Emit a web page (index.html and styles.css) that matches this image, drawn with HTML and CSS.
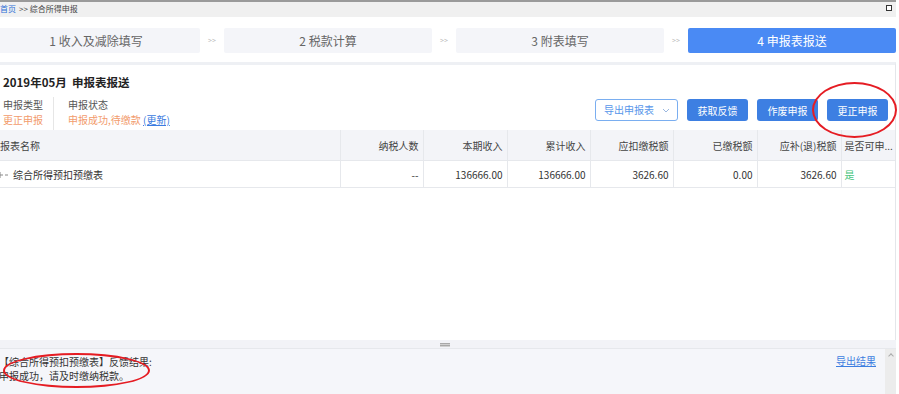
FILE: index.html
```html
<!DOCTYPE html>
<html lang="zh-CN">
<head>
    <meta charset="UTF-8">
    <meta name="viewport" content="width=device-width, initial-scale=1.0">
    <title>综合所得申报</title>
    <link rel="stylesheet" href="styles.css">
</head>
<body>
    <div class="page">
        <div class="crumb">
            <a href="#">首页</a> &gt;&gt; 综合所得申报
            <span class="win-btn"></span>
        </div>
        <div class="steps">
            <div class="step">1 收入及减除填写</div>
            <span class="sep">&gt;&gt;</span>
            <div class="step">2 税款计算</div>
            <span class="sep">&gt;&gt;</span>
            <div class="step">3 附表填写</div>
            <span class="sep">&gt;&gt;</span>
            <div class="step active">4 申报表报送</div>
        </div>
        <div class="card">
            <div class="card-head">
                <h2 class="title">2019年05月&nbsp;&nbsp;申报表报送</h2>
                <div class="info-bar">
                    <div class="info">
                        <div class="info-item">
                            <span class="lbl">申报类型</span>
                            <span class="val">更正申报</span>
                        </div>
                        <div class="info-item">
                            <span class="lbl">申报状态</span>
                            <span class="val">申报成功,待缴款 <a class="refresh" href="#">(更新)</a></span>
                        </div>
                    </div>
                    <div class="actions">
                        <div class="select">导出申报表
                            <svg class="chev" width="8" height="5" viewBox="0 0 8 5"><path d="M1 1l3 3 3-3" fill="none" stroke="#9bb8e0" stroke-width="1"/></svg>
                        </div>
                        <button class="btn">获取反馈</button>
                        <button class="btn">作废申报</button>
                        <button class="btn">更正申报</button>
                    </div>
                </div>
            </div>
            <table class="grid">
                <colgroup>
                    <col style="width:348px">
                    <col style="width:83px">
                    <col style="width:84px">
                    <col style="width:83px">
                    <col style="width:83px">
                    <col style="width:84px">
                    <col style="width:84px">
                    <col>
                </colgroup>
                <thead>
                    <tr>
                        <th class="name">报表名称</th>
                        <th>纳税人数</th>
                        <th>本期收入</th>
                        <th>累计收入</th>
                        <th>应扣缴税额</th>
                        <th>已缴税额</th>
                        <th>应补(退)税额</th>
                        <th class="flag">是否可申...</th>
                    </tr>
                </thead>
                <tbody>
                    <tr>
                        <td class="name">
                            <svg class="tree" width="14" height="10" viewBox="0 0 14 10"><path d="M1 5h6M4 2v6M9 5h3" fill="none" stroke="#888" stroke-width="1"/></svg>综合所得预扣预缴表
                        </td>
                        <td>--</td>
                        <td>136666.00</td>
                        <td>136666.00</td>
                        <td>3626.60</td>
                        <td>0.00</td>
                        <td>3626.60</td>
                        <td class="flag yes">是</td>
                    </tr>
                </tbody>
            </table>
        </div>
        <div class="splitter"><span class="grip"></span></div>
        <div class="result">
            <div class="result-text">
                <p>【综合所得预扣预缴表】反馈结果:</p>
                <p>申报成功，请及时缴纳税款。</p>
            </div>
            <a class="export" href="#">导出结果</a>
            <div class="scrollbar"><span class="arrow"></span></div>
        </div>
    </div>
    <div class="mark mark-btn"></div>
    <div class="mark mark-msg"></div>
</body>
</html>
```

FILE: styles.css
```css
html, body {
    margin: 0;
    height: 100%;
}
body {
    background-color: #ffffff;
    font-family: "Noto Sans CJK SC", "Noto Sans", sans-serif;
    color: #333333;
    overflow: hidden;
}
.page {
    width: 904px;
    margin-left: -8px;
}

/* breadcrumb */
.crumb {
    border-top: 2px solid #9a9a9a;
    background-color: #f0f0f0;
    height: 17px;
    box-sizing: border-box;
    padding: 2px 0 0 8px;
    font-size: 8px;
    line-height: 10px;
    color: #444444;
    display: flex;
    gap: 3px;
}
.crumb a {
    color: #2e6fd6;
    text-decoration: none;
}
.win-btn {
    margin: 1px 0 0 auto;
    margin-right: 4px;
    width: 4px;
    height: 4px;
    border: 1px solid #333333;
    background-color: #ffffff;
}

/* steps */
.steps {
    display: flex;
    padding: 11px 0 9px;
}
.step {
    flex: 1;
    height: 25px;
    line-height: 25px;
    background-color: #f4f5f9;
    border-radius: 2px;
    text-align: center;
    font-size: 12px;
    color: #666666;
}
.step.active {
    background-color: #4a8af4;
    color: #ffffff;
}
.sep {
    width: 24px;
    text-align: center;
    font-size: 7px;
    line-height: 25px;
    color: #bbbbbb;
}

/* card */
.card {
    height: 278px;
    box-sizing: border-box;
    border-top: 3px solid #eef0f4;
    border-right: 1px solid #e4e6ea;
}
.card-head {
    padding: 8px 7px 0 11px;
}
.title {
    margin: 0;
    font-size: 11.5px;
    line-height: 18px;
    font-weight: bold;
    color: #222222;
}
.info-bar {
    display: flex;
    justify-content: space-between;
    margin-top: 5px;
    height: 34px;
}
.info {
    display: flex;
    padding-top: 1px;
}
.info-item {
    display: flex;
    flex-direction: column;
    font-size: 10px;
    line-height: 15px;
    padding-right: 10px;
}
.info-item + .info-item {
    border-left: 1px solid #e6e6e6;
    padding-left: 14px;
}
.lbl {
    color: #555555;
}
.val {
    color: #f29b6c;
}
.refresh {
    color: #3a7be0;
}
.actions {
    display: flex;
    gap: 9px;
    padding-top: 3px;
}
.select {
    width: 83px;
    height: 22px;
    box-sizing: border-box;
    border: 1px solid #7aaef0;
    border-radius: 3px;
    padding: 0 0 0 8px;
    font-size: 10px;
    line-height: 20px;
    color: #5796ea;
    display: flex;
    align-items: center;
}
.chev {
    margin: 0 7px 0 auto;
}
.btn {
    width: 61px;
    height: 22px;
    border: none;
    border-radius: 3px;
    background-color: #3d7fe2;
    color: #ffffff;
    font-family: inherit;
    font-size: 10px;
    padding: 0;
}

/* table */
.grid {
    width: 100%;
    border-collapse: collapse;
    table-layout: fixed;
    font-size: 10px;
}
.grid th {
    height: 30px;
    background-color: #f3f4f8;
    font-weight: normal;
    color: #444444;
}
.grid td {
    height: 26px;
    color: #333333;
}
.grid th, .grid td {
    text-align: right;
    padding: 0 4px 0 0;
    border-bottom: 1px solid #e6e8ec;
    border-left: 1px solid #e6e8ec;
    white-space: nowrap;
    overflow: hidden;
}
.grid .name {
    text-align: left;
    border-left: none;
    padding-left: 8px;
}
.grid td.name {
    padding-left: 4px;
}
.grid .flag {
    text-align: left;
    padding-left: 3px;
}
.tree {
    vertical-align: -1px;
    margin-right: 3px;
}
.grid .yes {
    color: #43c47a;
}

/* splitter and result */
.splitter {
    height: 9px;
    box-sizing: border-box;
    background-color: #f2f3f7;
    border-bottom: 1px solid #e6e8ec;
    display: flex;
    justify-content: center;
    padding-top: 3px;
}
.grip {
    width: 10px;
    height: 4px;
    margin-left: 2px;
    background: repeating-linear-gradient(#a8a8a8 0 1px, #d0d0d0 1px 2px);
}
.result {
    display: flex;
    height: 46px;
    background-color: #f5f6fa;
}
.result-text {
    flex: 1;
    padding: 6px 0 0 7px;
    font-size: 10px;
    line-height: 14px;
    color: #333333;
}
.result-text p {
    margin: 0;
}
.export {
    align-self: flex-start;
    margin: 5px 9px 0 0;
    font-size: 10px;
    line-height: 13px;
    color: #3d7ee0;
}
.scrollbar {
    width: 11px;
    background-color: #ececec;
    display: flex;
    justify-content: center;
}
.arrow {
    width: 3px;
    height: 3px;
    margin-top: 5px;
    border-left: 1px solid #aaaaaa;
    border-top: 1px solid #aaaaaa;
    transform: rotate(45deg);
}

/* red annotation marks */
.mark {
    position: absolute;
    border: 2.5px solid #e51c23;
    border-radius: 50%;
    box-sizing: border-box;
}
.mark-btn {
    left: 812px;
    top: 82px;
    width: 85px;
    height: 56px;
}
.mark-msg {
    left: 3px;
    top: 353px;
    width: 147px;
    height: 35px;
}
```
